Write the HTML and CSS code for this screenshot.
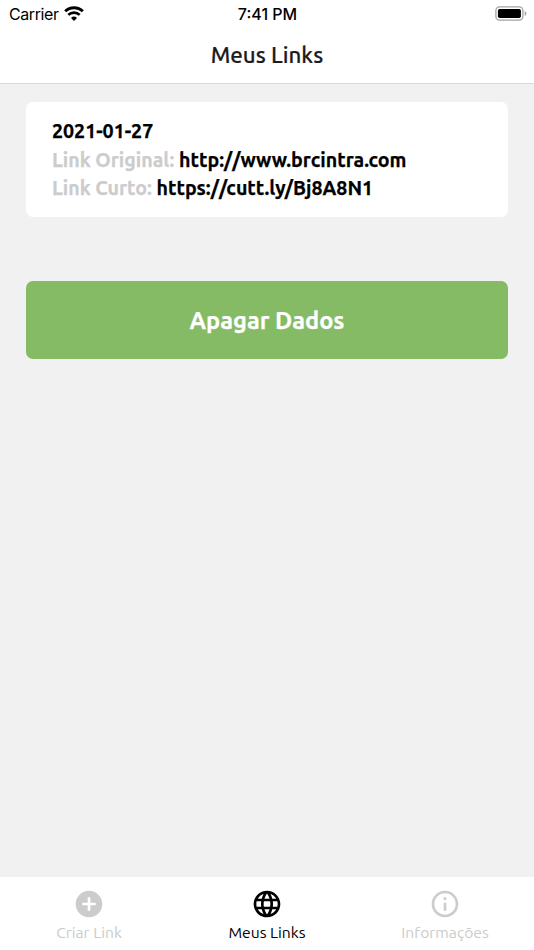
FILE: index.html
```html
<!DOCTYPE html>
<html lang="pt-BR">
<head>
  <meta charset="UTF-8">
  <meta name="viewport" content="width=device-width, initial-scale=1.0">
  <title>Meus Links</title>
  <link rel="stylesheet" href="styles.css">
</head>
<body>
  <div class="app">
    <!-- Status bar -->
    <div class="status-bar">
      <div class="carrier">
        <span>Carrier</span>
        <svg class="wifi" viewBox="0 0 20 15" width="20" height="15">
          <path d="M1.2 5.3 A12.6 12.6 0 0 1 18.8 5.3" fill="none" stroke="#000" stroke-width="3"/>
          <path d="M4.3 8.9 A8.1 8.1 0 0 1 15.7 8.9" fill="none" stroke="#000" stroke-width="2.7"/>
          <path d="M10 14.9 L7 11.9 A4.3 4.3 0 0 1 13 11.9 Z"/>
        </svg>
      </div>
      <span class="time">7:41 PM</span>
      <svg class="battery" viewBox="0 0 32 15" width="32" height="15">
        <rect x="0.9" y="0.9" width="27" height="13.2" rx="3.6" fill="none" stroke="#a3a3a3" stroke-width="1.3"/>
        <rect x="2.9" y="2.9" width="23" height="9.2" rx="1.8"/>
        <path d="M29.7 5 Q31.4 5.8 31.4 7.5 T29.7 10 Z" fill="#a3a3a3"/>
      </svg>
    </div>

    <header class="header">
      <h1 class="title">Meus Links</h1>
    </header>

    <!-- Saved links -->
    <main class="content">
      <div class="card">
        <p>2021-01-27</p>
        <p><span class="label">Link Original:</span> http://www.brcintra.com</p>
        <p><span class="label">Link Curto:</span> https://cutt.ly/Bj8A8N1</p>
      </div>
      <button class="clear-button">Apagar Dados</button>
    </main>

    <!-- Bottom tabs -->
    <nav class="tabs">
      <a class="tab">
        <svg viewBox="0 0 24 24" width="32" height="32"><path d="M12 2C6.48 2 2 6.48 2 12s4.48 10 10 10 10-4.48 10-10S17.52 2 12 2zm5 11h-4v4h-2v-4H7v-2h4V7h2v4h4v2z"/></svg>
        <span>Criar Link</span>
      </a>
      <a class="tab active">
        <svg viewBox="0 0 24 24" width="32" height="32"><path d="M11.99 2C6.47 2 2 6.48 2 12s4.47 10 9.99 10C17.52 22 22 17.52 22 12S17.52 2 11.99 2zm6.93 6h-2.95c-.32-1.25-.78-2.45-1.38-3.56 1.84.63 3.37 1.91 4.33 3.56zM12 4.04c.83 1.2 1.48 2.53 1.91 3.96h-3.82c.43-1.43 1.08-2.76 1.91-3.96zM4.26 14C4.1 13.36 4 12.69 4 12s.1-1.36.26-2h3.38c-.08.66-.14 1.32-.14 2s.06 1.34.14 2H4.26zm.82 2h2.95c.32 1.25.78 2.45 1.38 3.56-1.84-.63-3.37-1.9-4.33-3.56zm2.95-8H5.08c.96-1.66 2.49-2.93 4.33-3.56C8.81 5.55 8.35 6.75 8.03 8zM12 19.96c-.83-1.2-1.48-2.53-1.91-3.96h3.82c-.43 1.43-1.08 2.76-1.91 3.96zM14.34 14H9.66c-.09-.66-.16-1.32-.16-2s.07-1.35.16-2h4.68c.09.65.16 1.32.16 2s-.07 1.34-.16 2zm.25 5.56c.6-1.11 1.06-2.31 1.38-3.56h2.95c-.96 1.65-2.49 2.93-4.33 3.56zM16.36 14c.08-.66.14-1.32.14-2s-.06-1.34-.14-2h3.38c.16.64.26 1.31.26 2s-.1 1.36-.26 2h-3.38z"/></svg>
        <span>Meus Links</span>
      </a>
      <a class="tab">
        <svg viewBox="0 0 24 24" width="32" height="32"><path d="M11 17h2v-6h-2v6zm1-15C6.48 2 2 6.48 2 12s4.48 10 10 10 10-4.48 10-10S17.52 2 12 2zm0 18c-4.41 0-8-3.59-8-8s3.59-8 8-8 8 3.59 8 8-3.59 8-8 8zM11 9h2V7h-2v2z"/></svg>
        <span>Informações</span>
      </a>
    </nav>
  </div>
</body>
</html>
```
FILE: styles.css
```css
* {
  box-sizing: border-box;
}

body {
  margin: 0;
  font-family: Ubuntu, "Noto Sans", sans-serif;
  color: #000;
}

.app {
  display: flex;
  flex-direction: column;
  height: 100vh;
  background-color: #f1f1f1;
}

/* Status bar */
.status-bar {
  display: grid;
  grid-template-columns: 1fr auto 1fr;
  align-items: center;
  height: 28px;
  padding: 0 8px 0 9px;
  background-color: #fff;
  font-family: Inter, sans-serif;
  font-size: 16px;
}

.carrier {
  display: flex;
  align-items: center;
  gap: 5px;
  letter-spacing: -0.4px;
}

.wifi {
  margin-top: -2px;
}

.time {
  font-weight: 500;
}

.battery {
  justify-self: end;
  margin-top: -2px;
  margin-right: -1px;
}

/* Header */
.header {
  height: 56px;
  padding-top: 11px;
  background-color: #fff;
  border-bottom: 1px solid #d8d8d8;
  text-align: center;
}

.title {
  margin: 0;
  font-size: 22.3px;
  font-weight: 500;
  line-height: 32px;
  color: #1c1c1e;
  -webkit-text-stroke: 0.2px #1c1c1e;
}

/* Content */
.content {
  flex: 1;
  padding: 18px 26px;
}

.card {
  height: 115px;
  padding: 15px 26px;
  background-color: #fff;
  border-radius: 7px;
  font-size: 19.6px;
  font-weight: bold;
  -webkit-text-stroke: 0.25px;
}

.card p {
  margin: 0;
  line-height: 28.5px;
  white-space: nowrap;
}

.label {
  color: #ccc;
}

.clear-button {
  display: block;
  width: 100%;
  height: 78px;
  margin-top: 64px;
  border: none;
  border-radius: 7px;
  background-color: #85bb65;
  color: #fff;
  font-family: inherit;
  font-size: 23.6px;
  font-weight: bold;
  -webkit-text-stroke: 0.25px;
}

/* Bottom tabs */
.tabs {
  display: flex;
  height: 73px;
  padding-top: 11px;
  background-color: #fff;
}

.tab {
  flex: 1;
  display: flex;
  flex-direction: column;
  align-items: center;
  color: #ccc;
  font-size: 15.7px;
  line-height: 25px;
}

.tab svg {
  fill: currentColor;
}

.tab.active {
  color: #000;
}
```
